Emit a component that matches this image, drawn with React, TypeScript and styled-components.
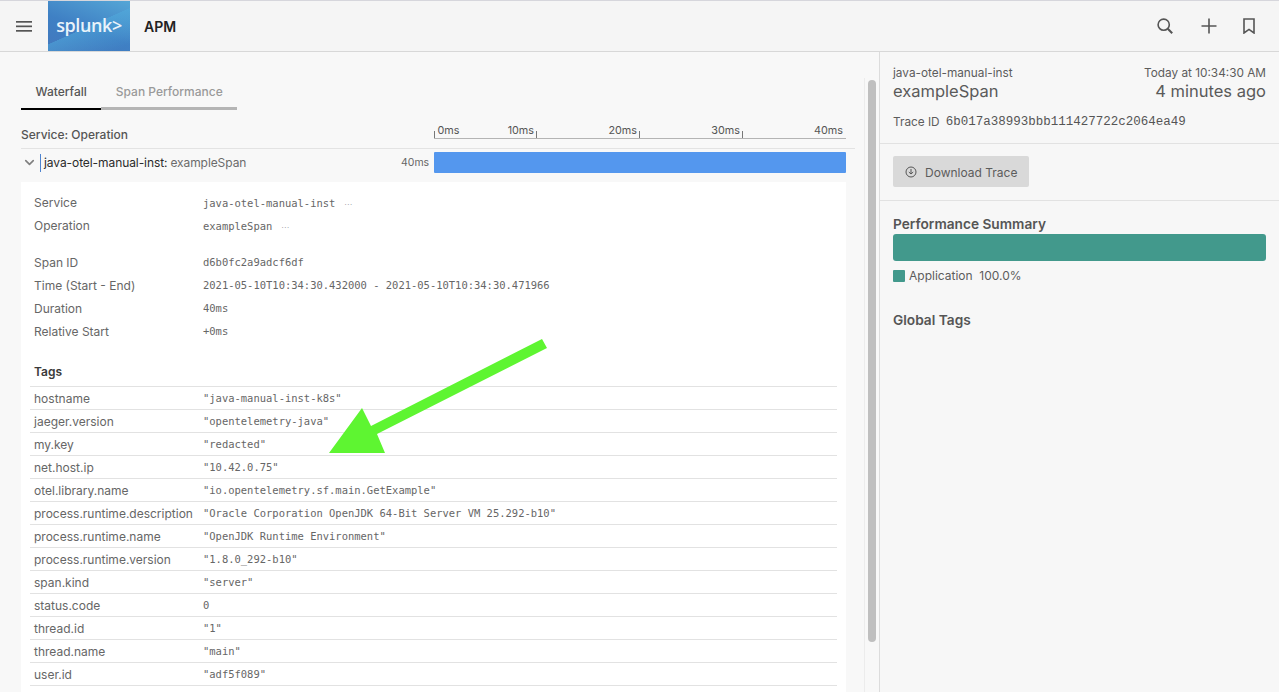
import React from 'react';
import styled, { createGlobalStyle } from 'styled-components';
import { ChevronDown } from 'lucide-react';

const GlobalStyle = createGlobalStyle`
    html, body {
        margin: 0;
        height: 692px;
        overflow: hidden;
        background: #f7f7f7;
        font-family: Inter, "Liberation Sans", sans-serif;
        color: #5c5c5c;
    }
    * {
        box-sizing: border-box;
    }
`;

const MONO = '"DejaVu Sans Mono", "Liberation Mono", monospace';

const Page = styled.div`
    position: relative;
    width: 1279px;
    height: 692px;
    overflow: hidden;
    display: flex;
    flex-direction: column;
`;

const Header = styled.header`
    height: 52px;
    flex: none;
    display: flex;
    align-items: center;
    background: #f5f5f5;
    border-top: 1px solid #d6d6dc;
    border-bottom: 1px solid #d8d8d8;
`;

const MenuButton = styled.div`
    width: 48px;
    display: flex;
    justify-content: center;
`;

const Logo = styled.div`
    width: 82px;
    height: 50px;
    display: flex;
    align-items: center;
    justify-content: center;
    padding-bottom: 3px;
    color: #e9f3fa;
    font-family: "Open Sans", sans-serif;
    font-size: 18px;
    font-weight: 600;
    letter-spacing: -0.4px;
    background:
        linear-gradient(156deg, rgba(255, 255, 255, 0) 50%, rgba(80, 170, 220, 0.55) 50.5%, rgba(80, 170, 220, 0) 92%),
        linear-gradient(20deg, #4378bd 0%, #3f80c4 45%, #55a6d6 100%);
`;

const Product = styled.div`
    margin-left: 14px;
    font-size: 14px;
    font-weight: 600;
    color: #222;
`;

const HeaderIcons = styled.div`
    margin-left: auto;
    margin-bottom: 1px;
    display: flex;
    align-items: center;
    padding-right: 24px;
`;

const IconSlot = styled.div<{ $gap: number }>`
    display: flex;
    margin-right: ${(p) => p.$gap}px;
`;

const Body = styled.div`
    flex: 1;
    min-height: 0;
    display: flex;
`;

const Main = styled.main`
    width: 864px;
    flex: none;
    padding: 28px 0 0 21px;
    background: #f8f8f8;
`;

const ScrollGutter = styled.div`
    width: 16px;
    flex: none;
    padding-top: 26px;
    background: #f8f8f8;
    border-right: 1px solid #dcdcdc;
`;

const ScrollTrack = styled.div`
    height: 100%;
    padding: 2px 3px 0 3px;
    border-left: 1px solid #ececec;
`;

const ScrollThumb = styled.div`
    height: 562px;
    border-radius: 4px;
    background: #bfbfbf;
`;

const Tabs = styled.div`
    display: flex;
    height: 30px;
`;

const Tab = styled.div<{ $active?: boolean }>`
    padding: 0 14.5px;
    line-height: 24px;
    font-size: 12px;
    font-weight: 500;
    color: ${(p) => (p.$active ? '#555' : '#9a9a9a')};
    border-bottom: ${(p) => (p.$active ? '2px solid #000' : '3px solid #b5b5b5')};
    height: 30px;
`;

const ColumnHead = styled.div`
    display: flex;
    height: 39px;
    border-bottom: 1px solid #e3e3e3;
    width: 834px;
`;

const HeadLabel = styled.div`
    width: 413px;
    padding-top: 17px;
    font-size: 12px;
    line-height: 15px;
    font-weight: 500;
    color: #555;
`;

const Ruler = styled.div`
    width: 412px;
    height: 15px;
    margin-top: 14px;
    display: flex;
    border-bottom: 1px solid #b4b4b4;
`;

const Tick = styled.div<{ $first?: boolean; $last?: boolean }>`
    position: relative;
    width: 103px;
    display: flex;
    justify-content: space-between;
    padding: 1px 3px 0 3.5px;
    font-size: 10.8px;
    line-height: 12px;
    color: #555;
    white-space: nowrap;
    margin-left: ${(p) => (p.$first ? '0' : 'auto')};
    &::before {
        content: ${(p) => (p.$first ? '""' : 'none')};
        position: absolute;
        left: 0;
        bottom: 0;
        width: 1px;
        height: 7px;
        background: #777;
    }
    &::after {
        content: ${(p) => (p.$last ? 'none' : '""')};
        position: absolute;
        right: 0;
        bottom: 0;
        width: 1px;
        height: 7px;
        background: #777;
    }
`;

const TickLabelEnd = styled.span`
    margin-left: auto;
`;

const SpanRow = styled.div`
    display: flex;
    align-items: center;
    height: 33px;
    padding-bottom: 6px;
    width: 825px;
`;

const SpanTitle = styled.div`
    flex: 1;
    display: flex;
    align-items: center;
    font-size: 12px;
    letter-spacing: -0.08px;
    color: #2b2b2b;
`;

const Chevron = styled(ChevronDown)`
    width: 15px;
    height: 15px;
    margin: 0 3px 0 1px;
    color: #808080;
    stroke-width: 2.6;
`;

const ServiceMark = styled.span`
    width: 1px;
    height: 18px;
    margin-right: 3px;
    background: #4d83cf;
`;

const Operation = styled.span`
    margin-left: 3px;
    color: #6b6b6b;
`;

const SpanDuration = styled.div`
    width: 33px;
    font-size: 10.5px;
    color: #666;
    white-space: nowrap;
`;

const SpanBar = styled.div`
    width: 412px;
    height: 21px;
    border-radius: 1px;
    background: #5497ee;
`;

const Detail = styled.section`
    width: 825px;
    height: 520px;
    padding: 9px 9px 0 9px;
    background: #fff;
`;

const InfoGroup = styled.div`
    margin-bottom: 13.5px;
    padding-left: 4px;
`;

const InfoRow = styled.div`
    display: flex;
    align-items: center;
    height: 23px;
`;

const Key = styled.div`
    width: 169px;
    flex: none;
    font-size: 12px;
    color: #666;
    white-space: nowrap;
`;

const Value = styled.div`
    font-family: ${MONO};
    font-size: 10.47px;
    color: #666;
    white-space: pre;
`;

const More = styled.span`
    margin-left: 9px;
    font-family: "Liberation Sans", sans-serif;
    font-size: 8px;
    color: #888;
`;

const TagsTitle = styled.div`
    height: 29.5px;
    padding: 8.5px 0 0 4px;
    font-size: 12px;
    line-height: 14px;
    font-weight: 600;
    color: #3a3a3a;
`;

const TagsList = styled.div`
    border-top: 1px solid #e2e2e2;
`;

const TagRow = styled(InfoRow)`
    padding: 1px 0 0 4px;
    border-bottom: 1px solid #e2e2e2;
`;

const Arrow = styled.svg`
    position: absolute;
    left: 0;
    top: 0;
    pointer-events: none;
`;

const Aside = styled.aside`
    flex: 1;
    background: #f7f7f7;
`;

const AsideSection = styled.div`
    padding: 0 13px;
    border-bottom: 1px solid #e2e2e2;
`;

const TraceSection = styled(AsideSection)`
    height: 92px;
    padding-top: 14px;
`;

const TitleLine = styled.div`
    display: flex;
    justify-content: space-between;
    align-items: center;
    font-size: 11.8px;
    line-height: 14px;
    color: #5c5c5c;
`;

const BigLine = styled(TitleLine)`
    font-size: 16.5px;
    line-height: 22px;
    color: #5a5a5a;
`;

const TraceLine = styled.div`
    display: flex;
    align-items: center;
    margin-top: 13px;
    font-size: 11.8px;
    color: #5c5c5c;
`;

const TraceId = styled.span`
    margin-left: 6px;
    font-family: "Liberation Mono", monospace;
    font-size: 12.5px;
    color: #555;
`;

const DownloadSection = styled(AsideSection)`
    height: 57px;
    padding-top: 12px;
`;

const DownloadButton = styled.div`
    width: 136px;
    height: 31px;
    display: flex;
    align-items: center;
    gap: 8px;
    padding: 1px 0 0 12px;
    border-radius: 2px;
    background: #d9d9d9;
    font-size: 12px;
    color: #5c5c5c;
`;

const Summary = styled.div`
    padding: 16px 13px 0;
`;

const SectionTitle = styled.div`
    font-size: 13.7px;
    line-height: 15px;
    font-weight: 600;
    color: #555;
`;

const SummaryBar = styled.div`
    height: 27px;
    margin-top: 2px;
    border-radius: 3px;
    background: #42998c;
`;

const Legend = styled.div`
    display: flex;
    align-items: center;
    margin-top: 8px;
    font-size: 12px;
    line-height: 14px;
    color: #5c5c5c;
`;

const Swatch = styled.span`
    width: 12px;
    height: 12px;
    margin-right: 4px;
    border-radius: 1px;
    background: #42998c;
`;

const GlobalTags = styled(SectionTitle)`
    margin-top: 30px;
`;

const ticks = ['20ms', '30ms', '40ms'];

const spanInfo: [string, string][] = [
    ['Span ID', 'd6b0fc2a9adcf6df'],
    ['Time (Start - End)', '2021-05-10T10:34:30.432000 - 2021-05-10T10:34:30.471966'],
    ['Duration', '40ms'],
    ['Relative Start', '+0ms'],
];

const tags: [string, string][] = [
    ['hostname', '"java-manual-inst-k8s"'],
    ['jaeger.version', '"opentelemetry-java"'],
    ['my.key', '"redacted"'],
    ['net.host.ip', '"10.42.0.75"'],
    ['otel.library.name', '"io.opentelemetry.sf.main.GetExample"'],
    ['process.runtime.description', '"Oracle Corporation OpenJDK 64-Bit Server VM 25.292-b10"'],
    ['process.runtime.name', '"OpenJDK Runtime Environment"'],
    ['process.runtime.version', '"1.8.0_292-b10"'],
    ['span.kind', '"server"'],
    ['status.code', '0'],
    ['thread.id', '"1"'],
    ['thread.name', '"main"'],
    ['user.id', '"adf5f089"'],
];

export default function App() {
    return (
        <Page>
            <GlobalStyle />
            <Header>
                <MenuButton>
                    <svg width="16" height="11" viewBox="0 0 16 11" fill="#555">
                        <rect y="0" width="16" height="1.7" />
                        <rect y="4.5" width="16" height="1.7" />
                        <rect y="9" width="16" height="1.7" />
                    </svg>
                </MenuButton>
                <Logo>splunk&gt;</Logo>
                <Product>APM</Product>
                <HeaderIcons>
                    <IconSlot $gap={28}>
                        <svg width="16" height="16" viewBox="0 0 16 16" fill="none" stroke="#555" strokeWidth="1.6">
                            <circle cx="6.7" cy="6.7" r="5.6" />
                            <path d="M10.8 10.8l4.4 4.4" strokeWidth="2.1" />
                        </svg>
                    </IconSlot>
                    <IconSlot $gap={26}>
                        <svg width="16" height="16" viewBox="0 0 16 16" fill="none" stroke="#555" strokeWidth="1.6">
                            <path d="M8 .5v15M.5 8h15" />
                        </svg>
                    </IconSlot>
                    <IconSlot $gap={0}>
                        <svg width="12" height="16" viewBox="0 0 12 16" fill="none" stroke="#555" strokeWidth="1.6">
                            <path d="M1 1h10v14l-5-3.6L1 15z" />
                        </svg>
                    </IconSlot>
                </HeaderIcons>
            </Header>
            <Body>
                <Main>
                    <Tabs>
                        <Tab $active>Waterfall</Tab>
                        <Tab>Span Performance</Tab>
                    </Tabs>
                    <ColumnHead>
                        <HeadLabel>Service: Operation</HeadLabel>
                        <Ruler>
                            <Tick $first>
                                <span>0ms</span>
                                <TickLabelEnd>10ms</TickLabelEnd>
                            </Tick>
                            {ticks.map((t) => (
                                <Tick key={t} $last={t === '40ms'}>
                                    <TickLabelEnd>{t}</TickLabelEnd>
                                </Tick>
                            ))}
                        </Ruler>
                    </ColumnHead>
                    <SpanRow>
                        <SpanTitle>
                            <Chevron />
                            <ServiceMark />
                            java-otel-manual-inst:
                            <Operation>exampleSpan</Operation>
                        </SpanTitle>
                        <SpanDuration>40ms</SpanDuration>
                        <SpanBar />
                    </SpanRow>
                    <Detail>
                        <InfoGroup>
                            <InfoRow>
                                <Key>Service</Key>
                                <Value>
                                    java-otel-manual-inst<More>···</More>
                                </Value>
                            </InfoRow>
                            <InfoRow>
                                <Key>Operation</Key>
                                <Value>
                                    exampleSpan<More>···</More>
                                </Value>
                            </InfoRow>
                        </InfoGroup>
                        <InfoGroup>
                            {spanInfo.map(([k, v]) => (
                                <InfoRow key={k}>
                                    <Key>{k}</Key>
                                    <Value>{v}</Value>
                                </InfoRow>
                            ))}
                        </InfoGroup>
                        <TagsTitle>Tags</TagsTitle>
                        <TagsList>
                            {tags.map(([k, v]) => (
                                <TagRow key={k}>
                                    <Key>{k}</Key>
                                    <Value>{v}</Value>
                                </TagRow>
                            ))}
                        </TagsList>
                    </Detail>
                </Main>
                <ScrollGutter>
                    <ScrollTrack>
                        <ScrollThumb />
                    </ScrollTrack>
                </ScrollGutter>
                <Aside>
                    <TraceSection>
                        <TitleLine>
                            <span>java-otel-manual-inst</span>
                            <span>Today at 10:34:30 AM</span>
                        </TitleLine>
                        <BigLine>
                            <span>exampleSpan</span>
                            <span>4 minutes ago</span>
                        </BigLine>
                        <TraceLine>
                            Trace ID<TraceId>6b017a38993bbb111427722c2064ea49</TraceId>
                        </TraceLine>
                    </TraceSection>
                    <DownloadSection>
                        <DownloadButton>
                            <svg width="12" height="12" viewBox="0 0 12 12" fill="none" stroke="#555" strokeWidth="1">
                                <circle cx="6" cy="6" r="5" />
                                <path d="M6 3v5M3.8 6L6 8l2.2-2" />
                            </svg>
                            Download Trace
                        </DownloadButton>
                    </DownloadSection>
                    <Summary>
                        <SectionTitle>Performance Summary</SectionTitle>
                        <SummaryBar />
                        <Legend>
                            <Swatch />
                            Application&nbsp;&nbsp;100.0%
                        </Legend>
                        <GlobalTags>Global Tags</GlobalTags>
                    </Summary>
                </Aside>
            </Body>
            <Arrow width="1279" height="692" viewBox="0 0 1279 692">
                <polygon points="542,339 547,348 377,434 385,453 329,453 362,408 371,426" fill="#5ef531" />
            </Arrow>
        </Page>
    );
}
